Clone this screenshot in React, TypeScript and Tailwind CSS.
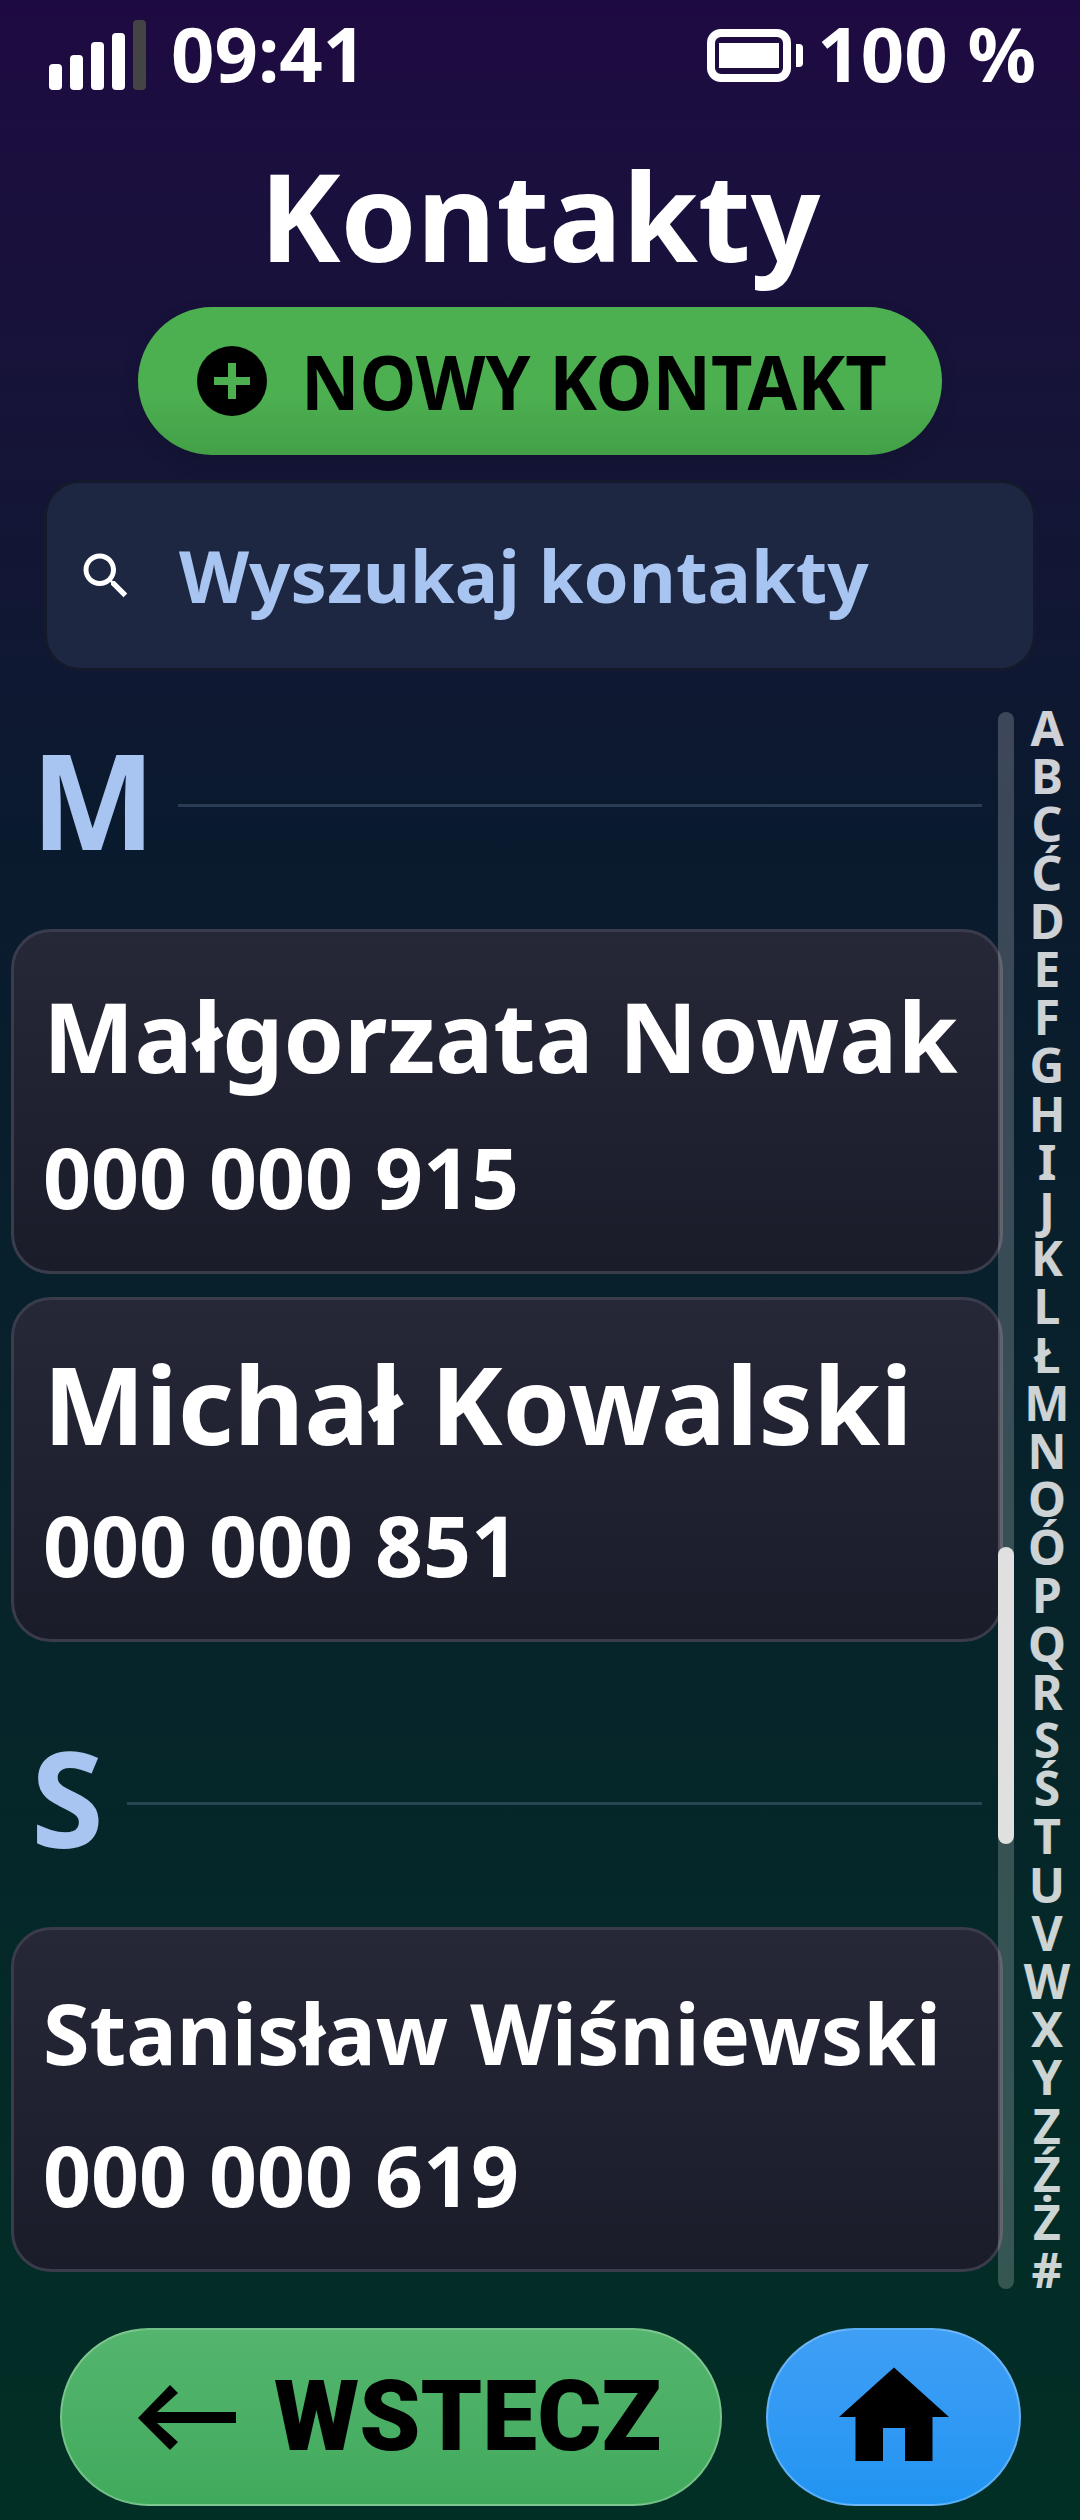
const LETTERS = ["A","B","C","Ć","D","E","F","G","H","I","J","K","L","Ł","M","N","O","Ó","P","Q","R","S","Ś","T","U","V","W","X","Y","Z","Ź","Ż","#"];

function Signal() {
  return (
    <div className="flex items-end gap-[8px] h-[70px] w-[97px] shrink-0">
      <div className="w-[13px] h-[26px] rounded-[4px] bg-white" />
      <div className="w-[13px] h-[35px] rounded-[4px] bg-white" />
      <div className="w-[13px] h-[48px] rounded-[4px] bg-white" />
      <div className="w-[13px] h-[57px] rounded-[4px] bg-white" />
      <div className="w-[13px] h-[70px] rounded-[4px] bg-[#444444]" />
    </div>
  );
}

function Battery() {
  return (
    <svg width="96" height="53" viewBox="0 0 96 53" className="block shrink-0">
      <rect x="4" y="4" width="76" height="45" rx="10" fill="none" stroke="#fff" strokeWidth="8" />
      <rect x="12" y="14" width="60" height="25" fill="#fff" />
      <path d="M89 15h3a4 4 0 0 1 4 4v15a4 4 0 0 1-4 4h-3z" fill="#fff" />
    </svg>
  );
}

function Section({ letter }: { letter: string }) {
  return (
    <div className="flex items-center h-[186px] pl-[20px] pr-[16px]">
      <span className="font-bold text-[132px] leading-none text-[#a8c4f0] pb-[12px]">{letter}</span>
      <div className="flex-1 h-[3px] bg-[#a8c4f0]/20 ml-[23px]" />
    </div>
  );
}

function Card({ name, phone, nameClass }: { name: string; phone: string; nameClass: string }) {
  return (
    <div className="w-[992px] h-[345px] rounded-[40px] border-[3px] border-[#3a3c4c] bg-gradient-to-b from-[#262838] to-[#1a1c2a] px-[29px] pt-[3px] flex flex-col">
      <div className={`h-[200px] flex items-center font-bold text-white leading-none whitespace-nowrap ${nameClass}`}>{name}</div>
      <div className="h-[84px] flex items-center font-bold text-white text-[84px] leading-none">{phone}</div>
    </div>
  );
}

export default function App() {
  return (
    <div className="w-[1080px] h-[2520px] overflow-hidden flex flex-col bg-gradient-to-b from-[#1e0a42] via-[#0a1a2e] via-33% to-[#012f25] font-['Noto_Sans',sans-serif] text-white">
      <div className="h-[110px] shrink-0 pl-[49px] pr-[44px] flex items-center justify-between">
        <div className="flex items-center gap-[25px]">
          <Signal />
          <span className="font-bold text-[76px] leading-none pb-[5px]">09:41</span>
        </div>
        <div className="flex items-center gap-[14px]">
          <Battery />
          <span className="font-bold text-[76px] leading-none pb-[5px]">100 %</span>
        </div>
      </div>

      <h1 className="text-center font-bold text-[122px] leading-none mt-[44px] h-[153px] shrink-0">Kontakty</h1>

      <div className="self-center w-[804px] h-[148px] shrink-0 rounded-full bg-gradient-to-b from-[#4caf50] via-[#4caf50] via-60% to-[#43a047] shadow-[0_8px_20px_rgba(0,0,0,0.1)] flex items-center pl-[59px] gap-[34px]">
        <svg width="70" height="70" viewBox="0 0 70 70" className="shrink-0">
          <circle cx="35" cy="35" r="35" fill="#000" />
          <path d="M31 17h8v14h14v8H39v14h-8V39H17v-8h14z" fill="#4caf50" />
        </svg>
        <span className="font-bold text-[72px] scale-y-[1.05] leading-none text-black whitespace-nowrap">NOWY KONTAKT</span>
      </div>

      <div className="mx-[44px] mt-[25px] h-[191px] shrink-0 rounded-[36px] border-[3px] border-[#141a2c] bg-[#1e2742] flex items-center pl-[29px]">
        <svg width="60" height="60" viewBox="0 0 24 24" fill="#fff" className="shrink-0">
          <path d="M15.5 14h-.79l-.28-.27C15.41 12.59 16 11.11 16 9.500 16 5.910 13.090 3 9.500 3S3 5.910 3 9.500 5.910 16 9.500 16c1.610 0 3.090-.59 4.230-1.570l.27.28v.79l5 4.990L20.490 19l-4.990-5zm-6 0C7.010 14 5 11.990 5 9.500S7.010 5 9.500 5 14 7.010 14 9.500 11.990 14 9.500 14z" />
        </svg>
        <span className="font-bold text-[72.5px] leading-none text-[#a8c4f0] ml-[43px] whitespace-nowrap">Wyszukaj kontakty</span>
      </div>

      <div className="flex mt-[41px] h-[1577px] shrink-0">
        <div className="w-[998px] shrink-0 pl-[11px]">
          <Section letter="M" />
          <div className="flex flex-col gap-[23px] mt-[31px]">
            <Card name="Małgorzata Nowak" phone="000 000 915" nameClass="text-[97px]" />
            <Card name="Michał Kowalski" phone="000 000 851" nameClass="text-[108.500px]" />
          </div>
          <div className="mt-[68px]"><Section letter="S" /></div>
          <div className="mt-[31px]">
            <Card name="Stanisław Wiśniewski" phone="000 000 619" nameClass="text-[84.500px]" />
          </div>
        </div>
        <div className="w-[16px] shrink-0 rounded-full bg-white/20 relative">
          <div className="absolute left-0 right-0 top-[835px] h-[297px] rounded-full bg-[#e0e0e0]" />
        </div>
        <div className="flex-1 flex flex-col items-center -mt-[8px]">
          {LETTERS.map((l) => (
            <div key={l} className="h-[48.2px] shrink-0 flex items-center font-bold text-[48px] leading-none text-white/80">{l}</div>
          ))}
        </div>
      </div>

      <div className="flex mt-[39px] pl-[60px] gap-[44px]">
        <div className="w-[662px] h-[178px] rounded-full border-[2px] border-white/25 bg-gradient-to-b from-[#54b56e] to-[#40aa5c] flex items-center pl-[76px] gap-[38px] text-black">
          <svg width="98" height="65" viewBox="0 0 98 65" className="shrink-0">
            <path d="M0 33L32 0l8 8-21 19h79v11H19l21 19-8 8z" fill="#000" />
          </svg>
          <span className="font-['Roboto',sans-serif] font-black text-[98px] leading-none whitespace-nowrap">WSTECZ</span>
        </div>
        <div className="w-[255px] h-[178px] rounded-full border-[2px] border-white/25 bg-gradient-to-b from-[#3f9ff5] to-[#2094f2] flex items-center justify-center">
          <svg width="132" height="132" viewBox="0 0 24 24" fill="#000">
            <path d="M10 20v-6h4v6h5v-8h3L12 3 2 12h3v8z" />
          </svg>
        </div>
      </div>
    </div>
  );
}
